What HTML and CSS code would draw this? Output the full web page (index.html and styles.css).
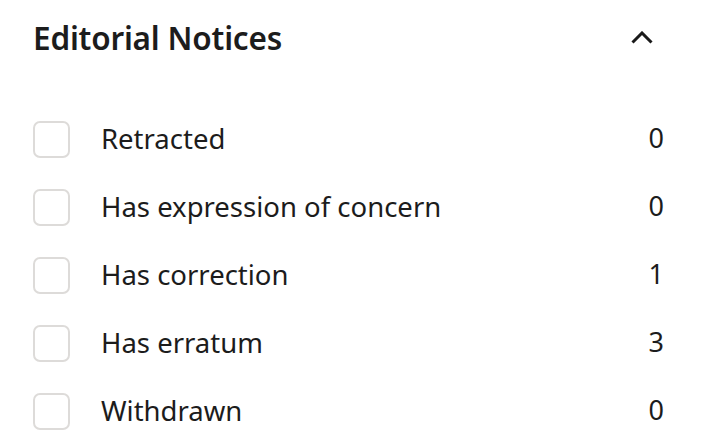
FILE: index.html
```html
<!DOCTYPE html>
<html>
<head>
<meta charset="utf-8">
<link rel="stylesheet" href="styles.css">
</head>
<body>
<section class="panel">
  <header class="panel-head">
    <h2 class="title">Editorial Notices</h2>
    <button class="toggle" aria-label="Collapse">
      <svg width="22" height="13" viewBox="0 0 22 13"><path d="M1.5 11.5 L11 2 L20.5 11.5" fill="none" stroke="#1a1a1a" stroke-width="3"/></svg>
    </button>
  </header>
  <ul class="list">
    <li class="row"><span class="box"></span><span class="label">Retracted</span><span class="count">0</span></li>
    <li class="row"><span class="box"></span><span class="label">Has expression of concern</span><span class="count">0</span></li>
    <li class="row"><span class="box"></span><span class="label">Has correction</span><span class="count">1</span></li>
    <li class="row"><span class="box"></span><span class="label">Has erratum</span><span class="count">3</span></li>
    <li class="row"><span class="box"></span><span class="label">Withdrawn</span><span class="count">0</span></li>
  </ul>
</section>
</body>
</html>
```
FILE: styles.css
```css
html, body { margin: 0; padding: 0; background: #fff; }
body { font-family: "Noto Sans", "Open Sans", sans-serif; color: #1c1c1c; }
.panel { padding: 15px 44px 0 33px; }
.panel-head { display: flex; align-items: center; justify-content: space-between; height: 45px; }
.title { margin: 0; font-size: 31.5px; font-weight: 600; letter-spacing: -0.2px; }
.toggle { background: none; border: 0; padding: 0; margin-right: 11px; display: flex; }
.list { list-style: none; margin: 60px 0 0 0; padding: 0; display: flex; flex-direction: column; gap: 30px; }
.row { display: flex; align-items: center; height: 38px; }
.box { width: 33px; height: 33px; border: 2.5px solid #dddbd9; border-radius: 7px; flex: none; }
.label { margin-left: 31px; font-size: 27.5px; flex: 1; line-height: 1.2; padding-bottom: 2px; }
.count { font-size: 27px; line-height: 1.2; padding-bottom: 2px; }
```
